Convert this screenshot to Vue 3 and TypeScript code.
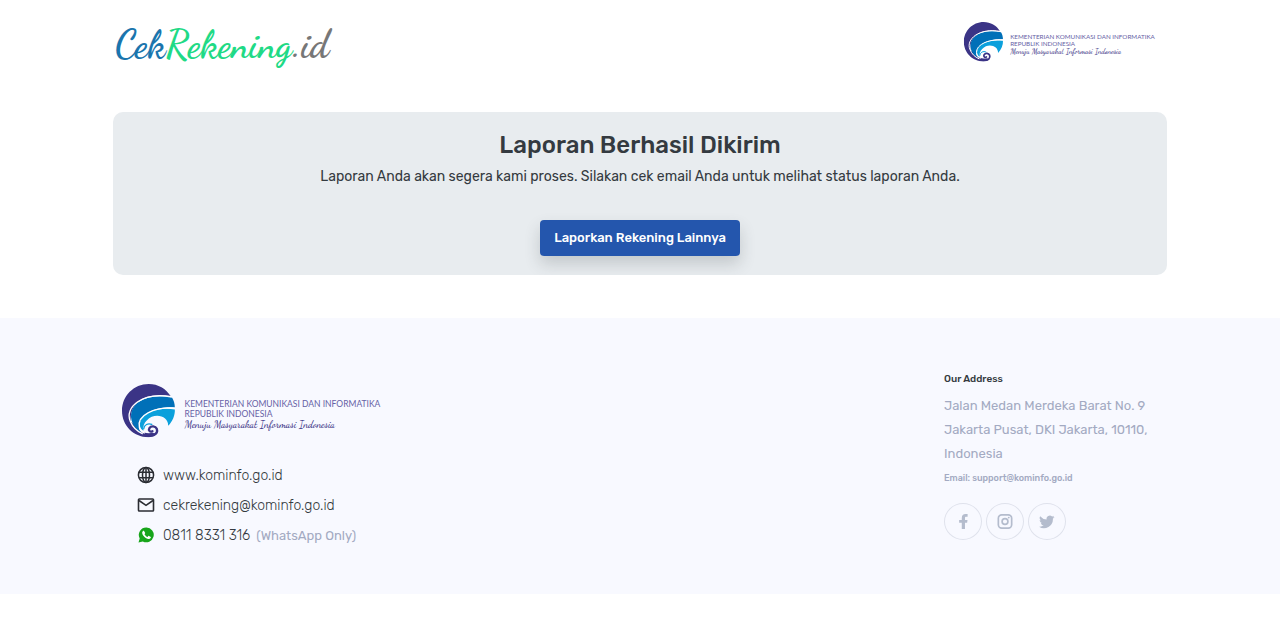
<script setup lang="ts">
interface Social {
  name: string
  path: string
}

const socials: Social[] = [
  {
    name: 'Facebook',
    path: 'M7.200 16V9.400H4.400V6.300h2.800V4.400C7.200 1.600 8.600 0 11.300 0h2.100v3h-1.500c-1 0-1.300.5-1.300 1.500v1.800h2.700l-.4 3.100h-2.300V16z'
  },
  {
    name: 'Instagram',
    path: 'M5 0h7a4.500 4.500 0 0 1 4.500 4.500v7A4.500 4.500 0 0 1 12 16H5A4.500 4.500 0 0 1 .5 11.500v-7A4.500 4.500 0 0 1 5 0zm0 1.800a2.700 2.700 0 0 0-2.700 2.700v7A2.700 2.700 0 0 0 5 14.200h7a2.700 2.700 0 0 0 2.700-2.700v-7A2.700 2.700 0 0 0 12 1.800zM8.500 4a4 4 0 1 1 0 8 4 4 0 0 1 0-8zm0 1.800a2.200 2.200 0 1 0 0 4.400 2.200 2.200 0 0 0 0-4.400zM12.500 2.800a1 1 0 1 1 0 2 1 1 0 0 1 0-2z'
  },
  {
    name: 'Twitter',
    path: 'M16.500 3.200c-.6.3-1.200.4-1.900.5.7-.4 1.200-1 1.400-1.800-.6.4-1.300.6-2.100.8A3.400 3.400 0 0 0 8.100 5.800 9.600 9.600 0 0 1 1.200 2.300a3.400 3.400 0 0 0 1 4.500c-.5 0-1-.2-1.500-.4 0 1.600 1.100 3 2.700 3.300-.5.1-1 .2-1.500.1.400 1.300 1.600 2.300 3.100 2.300A6.800 6.800 0 0 1 0 13.500 9.600 9.600 0 0 0 14.800 4.900c.7-.4 1.300-1 1.700-1.700z'
  }
]
</script>

<template>
  <svg class="defs" aria-hidden="true">
    <symbol id="ministry-mark" viewBox="0 0 160 160">
      <path fill="#3b3486" d="M146 37C132 14 108 0 80 0 35 0 0 36 0 80c0 44 34 79 79 79 10 0 18-3 24-8l-10-5c-18 4-33-1-42-11L26 112C24 60 61 23 146 37z" />
      <path fill="#0070b8" d="M150 41c5 8 8 18 8 29C96 66 50 92 51 134l8 12C2 116 15 18 150 41z" />
      <path fill="#0ba0dc" d="M158 76c1 17-7 36-20 49 2-29-40-42-64-16-8 8-12 17-10 31-12-6-13-20-7-32C71 80 113 70 158 76z" />
      <path fill="none" stroke="#fff" stroke-width="4" d="M148 38C62 22 6 70 25 112c7 17 19 29 37 37M159 72C94 68 43 95 52 130c2 8 8 14 16 17" />
      <path fill="none" stroke="#3b3486" stroke-width="7" stroke-linecap="round" d="M82 154c18 1 26-9 22-20-4-9-17-10-22-2-4 7 2 13 9 9" />
      <path fill="none" stroke="#0ba0dc" stroke-width="4" stroke-linecap="round" d="M65 134c1-12 13-18 24-13" />
    </symbol>
  </svg>

  <header class="container header">
    <a class="brand" href="#"><span class="cek">Cek</span><span class="rekening">Rekening</span><span class="id">.id</span></a>
    <svg class="ministry-small" viewBox="0 0 530 108" role="img" aria-label="Kementerian Komunikasi dan Informatika">
      <use href="#ministry-mark" width="107" height="107" />
      <text class="ministry-name" x="125" y="45">KEMENTERIAN KOMUNIKASI DAN INFORMATIKA</text>
      <text class="ministry-name" x="125" y="66">REPUBLIK INDONESIA</text>
      <text class="ministry-motto" x="125" y="87">Menuju Masyarakat Informasi Indonesia</text>
    </svg>
  </header>

  <main class="container">
    <section class="panel">
      <h1>Laporan Berhasil Dikirim</h1>
      <p>Laporan Anda akan segera kami proses. Silakan cek email Anda untuk melihat status laporan Anda.</p>
      <button type="button">Laporkan Rekening Lainnya</button>
    </section>
  </main>

  <footer class="footer">
    <div class="container footer-inner">
      <div class="contact">
        <svg class="ministry-large" viewBox="0 0 530 108" role="img" aria-label="Kementerian Komunikasi dan Informatika">
          <use href="#ministry-mark" width="107" height="107" />
          <text class="ministry-name" x="125" y="45">KEMENTERIAN KOMUNIKASI DAN INFORMATIKA</text>
          <text class="ministry-name" x="125" y="66">REPUBLIK INDONESIA</text>
          <text class="ministry-motto" x="125" y="87">Menuju Masyarakat Informasi Indonesia</text>
        </svg>
        <ul>
          <li>
            <svg class="icon" viewBox="0 0 18 18" fill="none" stroke="#2b2d33" stroke-width="1.500">
              <circle cx="9" cy="9" r="7.600" />
              <ellipse cx="9" cy="9" rx="3.500" ry="7.600" />
              <path d="M2 6.300h14M2 11.700h14M9 1.400v15.200" />
            </svg>
            <a href="#">www.kominfo.go.id</a>
          </li>
          <li>
            <svg class="icon" viewBox="0 0 18 18" fill="none" stroke="#2b2d33" stroke-width="1.600">
              <rect x="1.500" y="3" width="15" height="12" rx="0.800" />
              <path d="M2 4.500l7 4.800 7-4.800" />
            </svg>
            <a href="#">cekrekening@kominfo.go.id</a>
          </li>
          <li>
            <svg class="icon" viewBox="0 0 18 18">
              <path fill="#18a51b" d="M9.500 1.500a7.400 7.400 0 1 1-3.700 13.900L1.500 16.500l1.200-4.100A7.400 7.400 0 0 1 9.500 1.500z" />
              <path fill="#fff" d="M6.900 4.700c-.5-.2-1.500.5-1.700 1.600-.4 2.700 3.600 6.900 6.700 6.600 1.300-.1 2.200-1.200 1.900-2l-2.200-1.100c-.5.3-.7 1.200-1.300 1.100-1.200-.4-2.200-1.400-2.800-2.600 0-.5.800-.8.700-1.300z" />
            </svg>
            <span class="phone">0811 8331 316</span>
            <span class="note">(WhatsApp Only)</span>
          </li>
        </ul>
      </div>

      <div class="address">
        <h2>Our Address</h2>
        <address>Jalan Medan Merdeka Barat No. 9 Jakarta Pusat, DKI Jakarta, 10110, Indonesia</address>
        <p class="email">Email: support@kominfo.go.id</p>
        <nav class="socials">
          <a v-for="s in socials" :key="s.name" href="#" :aria-label="s.name">
            <svg viewBox="0 0 17 16"><path fill-rule="evenodd" :d="s.path" /></svg>
          </a>
        </nav>
      </div>
    </div>
  </footer>
</template>

<style>
body {
  margin: 0;
  background: #fff;
  color: #343a40;
  font-family: Rubik, Roboto, "Liberation Sans", sans-serif;
}
</style>

<style scoped>
.defs {
  position: absolute;
  width: 0;
  height: 0;
}

.container {
  box-sizing: border-box;
  width: calc(100% - 48px);
  max-width: 1054px;
  margin: 0 auto;
}

.header {
  display: flex;
  justify-content: space-between;
  align-items: flex-start;
  padding: 22px 6px 22px 2px;
  min-height: 112px;
}

.brand {
  font-family: "Dancing Script", Lato, sans-serif;
  font-size: 38px;
  font-weight: 700;
  line-height: 46px;
  text-decoration: none;
}

.cek {
  color: #1a75ad;
}

.rekening {
  color: #1fda86;
}

.id {
  color: #777;
}

.ministry-small {
  width: 198px;
  height: 40px;
}

.ministry-large {
  display: block;
  width: 265px;
  height: 54px;
  margin-left: 9px;
}

.ministry-name {
  fill: #6661a5;
  font-family: Lato, sans-serif;
  font-size: 17px;
}

.ministry-motto {
  fill: #3b3486;
  font-family: "Dancing Script", "Liberation Serif", serif;
  font-size: 20px;
  font-weight: 500;
}

.panel {
  display: flex;
  flex-direction: column;
  align-items: center;
  padding: 17px 16px 19px;
  border-radius: 10px;
  background: #e8ecef;
  text-align: center;
  overflow: hidden;
}

h1 {
  margin: 0;
  font-size: 24px;
  font-weight: 500;
  line-height: 32px;
}

.panel p {
  margin: 4px 0 31px;
  font-size: 14px;
  line-height: 24px;
}

button {
  height: 36px;
  padding: 0 14px;
  border: 0;
  border-radius: 4px;
  background: #2456ad;
  color: #fff;
  font: 500 13px/20px Rubik, Roboto, sans-serif;
  box-shadow: 0 8px 16px rgba(52, 58, 64, 0.2);
}

.footer {
  margin-top: 43px;
  padding: 52px 0 44px;
  background: #f8f9ff;
}

.footer-inner {
  display: flex;
  justify-content: space-between;
  align-items: flex-start;
}

.contact {
  padding-top: 14px;
}

ul {
  margin: 22px 0 0;
  padding: 0 0 0 24px;
  list-style: none;
}

li {
  display: flex;
  align-items: center;
  height: 30px;
  font-size: 14px;
  font-weight: 300;
}

li a {
  color: #343a40;
  text-decoration: none;
}

.icon {
  width: 18px;
  height: 18px;
  margin-right: 8px;
}

.note {
  margin-left: 6px;
  color: #a3aac2;
  font-size: 13px;
  font-weight: 400;
}

.address {
  width: 223px;
}

h2 {
  margin: 0;
  font-size: 10px;
  font-weight: 500;
  line-height: 18px;
}

address {
  max-width: 212px;
  margin: 6px 0 0;
  color: #a3aac2;
  font-size: 13px;
  font-style: normal;
  line-height: 24px;
}

.email {
  margin: 6px 0 19px;
  color: #a3aac2;
  font-size: 9px;
  font-weight: 500;
  line-height: 12px;
}

.socials {
  display: flex;
  gap: 4px;
}

.socials a {
  display: flex;
  align-items: center;
  justify-content: center;
  box-sizing: border-box;
  width: 38px;
  height: 37px;
  border: 1px solid #dfe2ec;
  border-radius: 50%;
}

.socials svg {
  width: 16px;
  height: 15px;
  fill: #b4bccd;
}
</style>
